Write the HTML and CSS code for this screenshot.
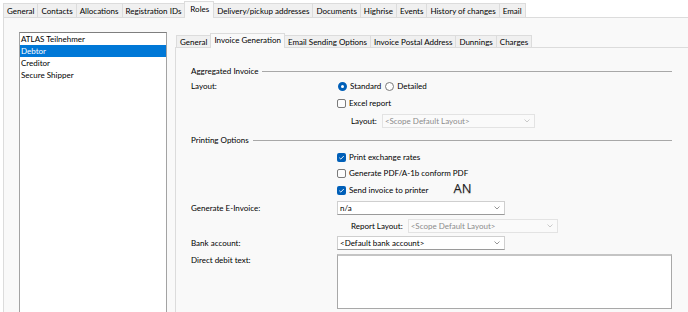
FILE: index.html
```html
<!DOCTYPE html>
<html>
<head>
<meta charset="utf-8">
<link rel="stylesheet" href="styles.css">
</head>
<body>
<div class="window">
  <div class="tabs top">
    <span class="tab">General</span>
    <span class="tab">Contacts</span>
    <span class="tab">Allocations</span>
    <span class="tab">Registration IDs</span>
    <span class="tab sel">Roles</span>
    <span class="tab">Delivery/pickup addresses</span>
    <span class="tab">Documents</span>
    <span class="tab">Highrise</span>
    <span class="tab">Events</span>
    <span class="tab">History of changes</span>
    <span class="tab last">Email</span>
  </div>
  <div class="panel">
    <div class="list">
      <div class="item">ATLAS Teilnehmer</div>
      <div class="item active">Debtor</div>
      <div class="item">Creditor</div>
      <div class="item">Secure Shipper</div>
    </div>
    <div class="subarea">
      <div class="tabs inner">
        <span class="tab">General</span>
        <span class="tab sel">Invoice Generation</span>
        <span class="tab">Email Sending Options</span>
        <span class="tab">Invoice Postal Address</span>
        <span class="tab">Dunnings</span>
        <span class="tab last">Charges</span>
      </div>
      <div class="subpanel">
        <div class="group g1"><span>Aggregated Invoice</span></div>
        <div class="row r-radio">
          <span class="lbl">Layout:</span>
          <span class="radio on"></span><span class="opt">Standard</span>
          <span class="radio"></span><span class="opt">Detailed</span>
        </div>
        <div class="row r-excel offset">
          <span class="check"></span><span class="opt">Excel report</span>
        </div>
        <div class="row r-sub sub">
          <span class="sublbl">Layout:</span>
          <span class="select disabled w153">&lt;Scope Default Layout&gt;<svg class="chev" width="6" height="4" viewBox="0 0 6 4"><polyline points="0.5,0.5 3,3 5.5,0.5" fill="none" stroke="#c4c4c4" stroke-width="0.9"/></svg></span>
        </div>
        <div class="group g2"><span>Printing Options</span></div>
        <div class="row r-c1 offset">
          <span class="check on"><svg width="9" height="9" viewBox="0 0 9 9"><polyline points="2.3,4.7 3.8,6.1 6.8,3" fill="none" stroke="#fff" stroke-width="0.9"/></svg></span><span class="opt">Print exchange rates</span>
        </div>
        <div class="row r-c2 offset">
          <span class="check"></span><span class="opt">Generate PDF/A-1b conform PDF</span>
        </div>
        <div class="row r-c3 offset">
          <span class="check on"><svg width="9" height="9" viewBox="0 0 9 9"><polyline points="2.3,4.7 3.8,6.1 6.8,3" fill="none" stroke="#fff" stroke-width="0.9"/></svg></span><span class="opt">Send invoice to printer</span>
          <span class="note">AN</span>
        </div>
        <div class="row r-ei">
          <span class="lbl">Generate E-Invoice:</span>
          <span class="select w168">n/a<svg class="chev" width="6" height="4" viewBox="0 0 6 4"><polyline points="0.5,0.5 3,3 5.5,0.5" fill="none" stroke="#8a8a8a" stroke-width="0.9"/></svg></span>
        </div>
        <div class="row r-rl sub">
          <span class="sublbl">Report Layout:</span>
          <span class="select disabled w150">&lt;Scope Default Layout&gt;<svg class="chev" width="6" height="4" viewBox="0 0 6 4"><polyline points="0.5,0.5 3,3 5.5,0.5" fill="none" stroke="#c4c4c4" stroke-width="0.9"/></svg></span>
        </div>
        <div class="row r-bank">
          <span class="lbl">Bank account:</span>
          <span class="select w168">&lt;Default bank account&gt;<svg class="chev" width="6" height="4" viewBox="0 0 6 4"><polyline points="0.5,0.5 3,3 5.5,0.5" fill="none" stroke="#8a8a8a" stroke-width="0.9"/></svg></span>
        </div>
        <div class="row r-dd">
          <span class="lbl top">Direct debit text:</span>
          <span class="textarea"></span>
        </div>
      </div>
    </div>
  </div>
</div>
</body>
</html>
```

FILE: styles.css
```css
* { box-sizing: border-box; }
html, body { margin: 0; padding: 0; }
body {
  width: 688px;
  height: 312px;
  overflow: hidden;
  background: #ffffff;
  font-family: Lato, "Open Sans", sans-serif;
  font-size: 8px;
  color: #000;
}
.window {
  padding: 1px 0 0 3px;
  display: flex;
  flex-direction: column;
}
.tabs {
  display: flex;
  align-items: flex-end;
  position: relative;
  z-index: 2;
}
.tabs.top { height: 16px; }
.tabs.inner { height: 14px; padding-left: 1px; }
.tab {
  display: flex;
  align-items: center;
  white-space: nowrap;
  background: #f0f0f0;
  border: 1px solid #dcdcdc;
  border-right: none;
  border-bottom: none;
  padding: 0 3px;
  line-height: 10px;
}
.tabs.top .tab { height: 14px; }
.tabs.inner .tab { height: 12px; }
.tab.last { border-right: 1px solid #dcdcdc; }
.tab.sel {
  background: #f9f9f9;
  border-right: 1px solid #dcdcdc;
  margin-bottom: -1px;
}
.tabs.top .tab.sel { padding: 0 4px 2px 5px; }
.tab.sel + .tab { border-left: none; }
.tabs.top .tab.sel { height: 17px; }
.tabs.inner .tab.sel { height: 15px; padding-bottom: 2px; }
.panel {
  display: flex;
  align-items: flex-start;
  height: 296px;
  background: #f9f9f9;
  border-top: 1px solid #dcdcdc;
  border-left: 1px solid #dcdcdc;
  padding: 14px 0 0 15px;
}
.list {
  flex: none;
  width: 148px;
  height: 290px;
  background: #fff;
  border: 1px solid #a3a3a3;
  border-top-color: #7f7f7f;
}
.item {
  height: 12px;
  line-height: 12px;
  padding-left: 1px;
  white-space: nowrap;
}
.item.active {
  background: #0078d7;
  color: #fff;
}
.subarea {
  flex: 1;
  margin: 1px 0 0 8px;
  display: flex;
  flex-direction: column;
}
.subpanel {
  height: 270px;
  background: #f9f9f9;
  border-top: 1px solid #dcdcdc;
  border-left: 1px solid #dcdcdc;
  padding: 16px 16px 0 15px;
  display: flex;
  flex-direction: column;
}
.group {
  display: flex;
  align-items: center;
  white-space: nowrap;
}
.group::after {
  content: "";
  flex: 1;
  border-top: 1px solid #a8a8a8;
  margin-left: 4px;
}
.g1 { height: 14px; }
.g2 { height: 20px; }
.row {
  display: flex;
  align-items: center;
  white-space: nowrap;
}
.row.offset { padding-left: 146px; }
.row.sub { padding-left: 160px; }
.lbl { flex: none; width: 146px; }
.lbl.top { align-self: flex-start; margin-top: 2px; line-height: 12px; }
.sublbl { margin-right: 5px; }
.r-radio { height: 16px; }
.r-excel { height: 18px; }
.r-sub { height: 18px; }
.r-c1 { height: 14px; }
.r-c2 { height: 18px; }
.r-c3 { height: 16px; }
.r-ei { height: 20px; }
.r-rl { height: 16px; }
.r-bank { height: 18px; }
.r-dd { height: 58px; align-items: flex-start; }
.radio {
  flex: none;
  width: 9px;
  height: 9px;
  border-radius: 50%;
  border: 1px solid #7a7a7a;
  background: #fff;
  margin-left: 1px;
}
.radio.on {
  border: 3px solid #005fb8;
  background: #fff;
}
.opt { margin-left: 3px; margin-right: 3px; }
.check {
  flex: none;
  width: 9px;
  height: 9px;
  border-radius: 2px;
  border: 1px solid #7a7a7a;
  background: #fcfcfc;
  display: flex;
}
.check.on {
  border: none;
  background: #005fb8;
}
.check svg { display: block; }
.note {
  margin-left: 22px;
  font-family: "Open Sans", sans-serif;
  font-size: 13px;
  line-height: 14px;
  color: #1c1c1c;
  margin-top: -5px;
  text-shadow: 0 1px 1px rgba(0,0,0,0.25);
}
.select {
  flex: none;
  height: 14px;
  display: flex;
  align-items: center;
  justify-content: space-between;
  background: #fff;
  border: 1px solid #cfcfcf;
  border-bottom-color: #9a9a9a;
  padding: 0 4px 0 2px;
}
.select.disabled {
  background: #fafafa;
  border: 1px solid #e3e3e3;
  color: #8c8c8c;
}
.w153 { width: 153px; }
.w150 { width: 150px; }
.w168 { width: 168px; }
.chev { display: block; }
.textarea {
  flex: 1;
  height: 55px;
  margin-top: 2px;
  background: #fff;
  border: 1px solid #a8a8a8;
  border-top: 2px solid #c4c4c4;
}
```
